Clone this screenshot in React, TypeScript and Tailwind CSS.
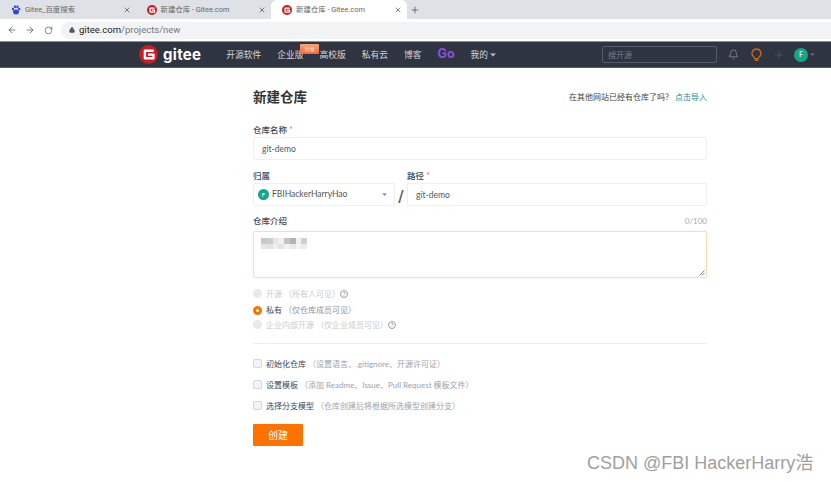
import React from 'react';
import { ArrowLeft, ArrowRight, RotateCw, Lock, X, Plus, Bell } from 'lucide-react';

const cjk = { fontFamily: 'Lato, "Noto Sans CJK SC", sans-serif' };

const GiteeLogo: React.FC<{ size: number }> = ({ size }) => (
  <svg width={size} height={size} viewBox="0 0 24 24" className="shrink-0">
    <circle cx="12" cy="12" r="12" fill="#c71d23" />
    <path d="M18.5 7.2H7.4v9.6h10.9v-4.6h-7" fill="none" stroke="#fff" strokeWidth="3" strokeLinejoin="round" />
  </svg>
);

const Tab: React.FC<{ title: string; active?: boolean; baidu?: boolean }> = ({ title, active, baidu }) => (
  <div className={`flex items-center h-[19px] w-[135.5px] pl-[11px] pr-[3px] rounded-t-md ${active ? 'bg-white' : ''}`}>
    {baidu ? (
      <svg width="10" height="10" viewBox="0 0 10 10" className="shrink-0">
        <circle cx="2" cy="4" r="1.2" fill="#3245df" />
        <circle cx="4" cy="1.8" r="1.2" fill="#3245df" />
        <circle cx="6.4" cy="1.8" r="1.2" fill="#3245df" />
        <circle cx="8.2" cy="4" r="1.2" fill="#3245df" />
        <ellipse cx="5" cy="7" rx="3" ry="2.4" fill="#3245df" />
      </svg>
    ) : (
      <GiteeLogo size={10} />
    )}
    <span className="ml-[4px] text-[7.4px] leading-[10px] text-[#666] flex-1 whitespace-nowrap" style={{ fontFamily: 'Roboto, "Noto Sans CJK SC", sans-serif' }}>{title}</span>
    <X size={8} strokeWidth={2} className="text-[#444] mr-[2px]" />
  </div>
);

const Field: React.FC<{ label: string; required?: boolean; children: React.ReactNode; right?: string }> = ({ label, required, children, right }) => (
  <div>
    <div className="flex justify-between items-center h-[14px]">
      <span className="text-[8.5px] font-medium text-[#40485b]" style={cjk}>
        {label}
        {required && <span className="text-[#f56c6c]"> *</span>}
      </span>
      {right && <span className="text-[8px] text-[#a5a9b3]">{right}</span>}
    </div>
    {children}
  </div>
);

const Input: React.FC<{ value: string }> = ({ value }) => (
  <div className="h-[23px] flex items-center pl-[8px] pt-[1px] border border-[#eef0f3] rounded-[2px] text-[8.5px] text-[#555]">
    {value}
  </div>
);

const Radio: React.FC<{ label: string; note: string; checked?: boolean; help?: boolean; className: string }> = ({ label, note, checked, help, className }) => (
  <div className={`flex items-center ${className}`}>
    {checked ? (
      <span className="w-[9px] h-[9px] rounded-full border-[3px] border-[#fe7300] bg-white" />
    ) : (
      <span className="w-[9px] h-[9px] rounded-full bg-[#e8e9eb]" />
    )}
    <span className={`ml-[4px] text-[8px] ${checked ? 'text-[#40485b]' : 'text-[#c9cbd0]'}`}>{label}</span>
    <span className={`ml-[2px] text-[8px] ${checked ? 'text-[#8c92a4]' : 'text-[#c9cbd0]'}`}>（{note}）</span>
    {help && (
      <span className="w-[8px] h-[8px] rounded-full border border-[#9a9ea8] text-[6px] leading-none flex items-center justify-center text-[#777]">?</span>
    )}
  </div>
);

const Check: React.FC<{ label: string; note: string }> = ({ label, note }) => (
  <div className="flex items-center h-[21px]">
    <span className="w-[9px] h-[9px] rounded-[2px] border border-[#d4d6db] bg-[#f3f4f6]" />
    <span className="ml-[4px] text-[8px] text-[#40485b]">{label}</span>
    <span className="ml-[2px] text-[8px] text-[#9ea2b0]">（{note}）</span>
  </div>
);

const navItems = ['开源软件', '企业版', '高校版', '私有云', '博客'];

// pixelated patch that hides the description text
const mosaicTop = ['bg-[#c8c8c8]', 'bg-[#cccccc]', 'bg-[#e6e6e6]', 'bg-[#f0f0f0]', 'bg-[#c4c4c4]', 'bg-[#b4b4b4]', 'bg-[#f2f2f2]', 'bg-[#d0d0d0]'];
const mosaicBottom = ['bg-[#e6e6e6]', 'bg-[#e2e2e2]', 'bg-[#f0f0f0]', 'bg-[#e4e4e4]', 'bg-[#f2f2f2]', 'bg-[#e8e8e8]', 'bg-[#f5f5f5]', 'bg-[#ebebeb]'];

export default function App() {
  return (
    <div className="relative w-[831px] h-[482px] overflow-hidden bg-white" style={cjk}>
      {/* Browser tabs */}
      <div className="h-[19px] bg-[#dee1e6] flex items-center">
        <Tab title="Gitee_百度搜索" baidu />
        <Tab title="新建仓库 - Gitee.com" />
        <Tab title="新建仓库 - Gitee.com" active />
        <Plus size={10} strokeWidth={1.6} className="ml-[3px] text-[#444]" />
      </div>
      <div className="h-[22px] bg-white flex items-center pl-[7px]">
        <ArrowLeft size={10} className="text-[#5f6368]" />
        <ArrowRight size={10} className="ml-[8px] text-[#5f6368]" />
        <RotateCw size={9} className="ml-[9px] text-[#5f6368]" />
        <div className="ml-[8px] flex-1 h-[17px] bg-[#f1f3f4] rounded-l-full flex items-center pl-[8px] text-[9.5px]" style={{ fontFamily: 'Roboto, sans-serif' }}>
          <Lock size={6} className="text-[#555]" fill="#555" />
          <span className="ml-[4px] text-[#222]">gitee.com<span className="text-[#777]">/projects/new</span></span>
        </div>
      </div>

      {/* Gitee nav */}
      <div className="h-[27px] bg-[#2e3440] border-t border-b border-t-[#8a8f99] border-b-[#565c68] flex items-center pl-[139px] pr-[16px]">
        <GiteeLogo size={19} />
        <span className="ml-[5px] text-[15px] font-bold leading-none text-white tracking-[0.3px]" style={{ fontFamily: 'Inter, sans-serif' }}>gitee</span>
        <div className="ml-[25px] flex items-center gap-[16px] text-[8.75px] text-[#d5d7db]">
          {navItems.map(item => (
            <span key={item} className="relative">
              {item}
              {item === '企业版' && (
                <span className="absolute left-[23px] -top-[4px] w-[19px] h-[10px] bg-gradient-to-b from-[#f9a67a] to-[#f4653c] rounded-[1px] text-[5px] leading-[10px] text-center text-[#ffe0cc]">特惠</span>
              )}
            </span>
          ))}
          <span className="text-[12.5px] font-bold text-[#8b4fe0] leading-none" style={{ fontFamily: 'Inter, sans-serif' }}>Go</span>
          <span className="flex items-center">
            我的
            <svg width="6" height="4" viewBox="0 0 6 4" className="ml-[2px]"><path d="M0 0.5h6L3 3.5z" fill="#b9bcc3" /></svg>
          </span>
        </div>
        <div className="ml-auto flex items-center">
          <div className="w-[115px] h-[17px] border border-[#555b69] rounded-[2px] flex items-center pl-[5px] text-[8px] text-[#767c8a]">搜开源</div>
          <Bell size={11} strokeWidth={1.2} className="ml-[11px] text-[#b5b8be]" />
          <svg width="11" height="13" viewBox="0 0 11 13" className="ml-[12px]" fill="none" stroke="#c7661f" strokeWidth="1.3">
            <path d="M5.5 1a4.4 4.4 0 0 0-2.6 8c.5.4.7.9.7 1.6h3.8c0-.7.2-1.2.7-1.6a4.4 4.4 0 0 0-2.6-8z" />
            <path d="M3.8 12.2h3.4" strokeWidth="1.6" />
          </svg>
          <Plus size={12} strokeWidth={1} className="ml-[11px] text-[#666c78]" />
          <span className="ml-[9px] w-[14px] h-[14px] rounded-full bg-[#17a589] flex items-center justify-center text-[7.5px] text-white">F</span>
          <svg width="5" height="3" viewBox="0 0 6 4" className="ml-[2px]"><path d="M0 0.5h6L3 3.5z" fill="#70757f" /></svg>
        </div>
      </div>

      {/* Form */}
      <div className="w-[454px] ml-[253px] pt-[19px]">
        <div className="flex justify-between items-center h-[20px]">
          <h1 className="text-[13.5px] font-bold text-[#333]">新建仓库</h1>
          <span className="text-[8px] text-[#444]">
            在其他网站已经有仓库了吗？ <span className="text-[#2d7f9e]">点击导入</span>
          </span>
        </div>

        <div className="mt-[16px]">
          <Field label="仓库名称" required>
            <Input value="git-demo" />
          </Field>
        </div>

        <div className="flex items-end mt-[9px]">
          <div className="w-[142px]">
            <Field label="归属">
              <div className="h-[23px] flex items-center pl-[4px] pr-[7px] border border-[#eef0f3] rounded-[2px] text-[8.5px] text-[#555]">
                <span className="w-[11px] h-[11px] rounded-full bg-[#17a589] text-white text-[6px] flex items-center justify-center">F</span>
                <span className="ml-[3px] flex-1">FBIHackerHarryHao</span>
                <svg width="5" height="3" viewBox="0 0 6 4"><path d="M0 0.5h6L3 3.5z" fill="#777" /></svg>
              </div>
            </Field>
          </div>
          <div className="w-[12px] h-[23px] pt-[3px] flex items-center justify-center text-[19px] leading-none text-[#555]" style={{ fontFamily: '"Liberation Sans", sans-serif' }}>/</div>
          <div className="flex-1">
            <Field label="路径" required>
              <Input value="git-demo" />
            </Field>
          </div>
        </div>

        <div className="mt-[8px]">
          <Field label="仓库介绍" right="0/100">
            <div className="relative mt-[3px] h-[47px] border border-[#fcdcc0] shadow-[0_0_2px_#fdebd9] rounded-[2px] pl-[7px] pt-[6px]">
              <div className="w-[46px] blur-[0.7px]">
                <div className="flex">
                  {mosaicTop.map((c, i) => <span key={i} className={`h-[6px] flex-1 ${c}`} />)}
                </div>
                <div className="flex">
                  {mosaicBottom.map((c, i) => <span key={i} className={`h-[5px] flex-1 ${c}`} />)}
                </div>
              </div>
              <svg width="6" height="6" viewBox="0 0 6 6" className="absolute right-[1px] bottom-[1px]" stroke="#666" strokeWidth="0.8">
                <path d="M0.5 5.5L5.5 0.5M3 5.5L5.5 3" />
              </svg>
            </div>
          </Field>
        </div>

        <div className="mt-[7px]">
          <Radio className="h-[17px]" label="开源" note="所有人可见" help />
          <Radio className="h-[16px]" label="私有" note="仅仓库成员可见" checked />
          <Radio className="h-[13px]" label="企业内部开源" note="仅企业成员可见" help />
        </div>

        <div className="mt-[12px] border-t border-[#eeeff1] pt-[9px]">
          <Check label="初始化仓库" note="设置语言、.gitignore、开源许可证" />
          <Check label="设置模板" note="添加 Readme、Issue、Pull Request 模板文件" />
          <Check label="选择分支模型" note="仓库创建后将根据所选模型创建分支" />
        </div>

        <button className="mt-[8px] w-[50px] h-[22px] bg-[#fe7300] rounded-[1px] text-white text-[10px]">创建</button>
      </div>

      {/* CSDN watermark */}
      <div className="absolute left-[587px] top-[450px] text-[18px] leading-[26px] text-[#a0a0a0] whitespace-nowrap" style={{ fontFamily: '"Liberation Sans", "Noto Sans CJK SC", sans-serif' }}>
        CSDN @FBI HackerHarry浩
      </div>
    </div>
  );
}
